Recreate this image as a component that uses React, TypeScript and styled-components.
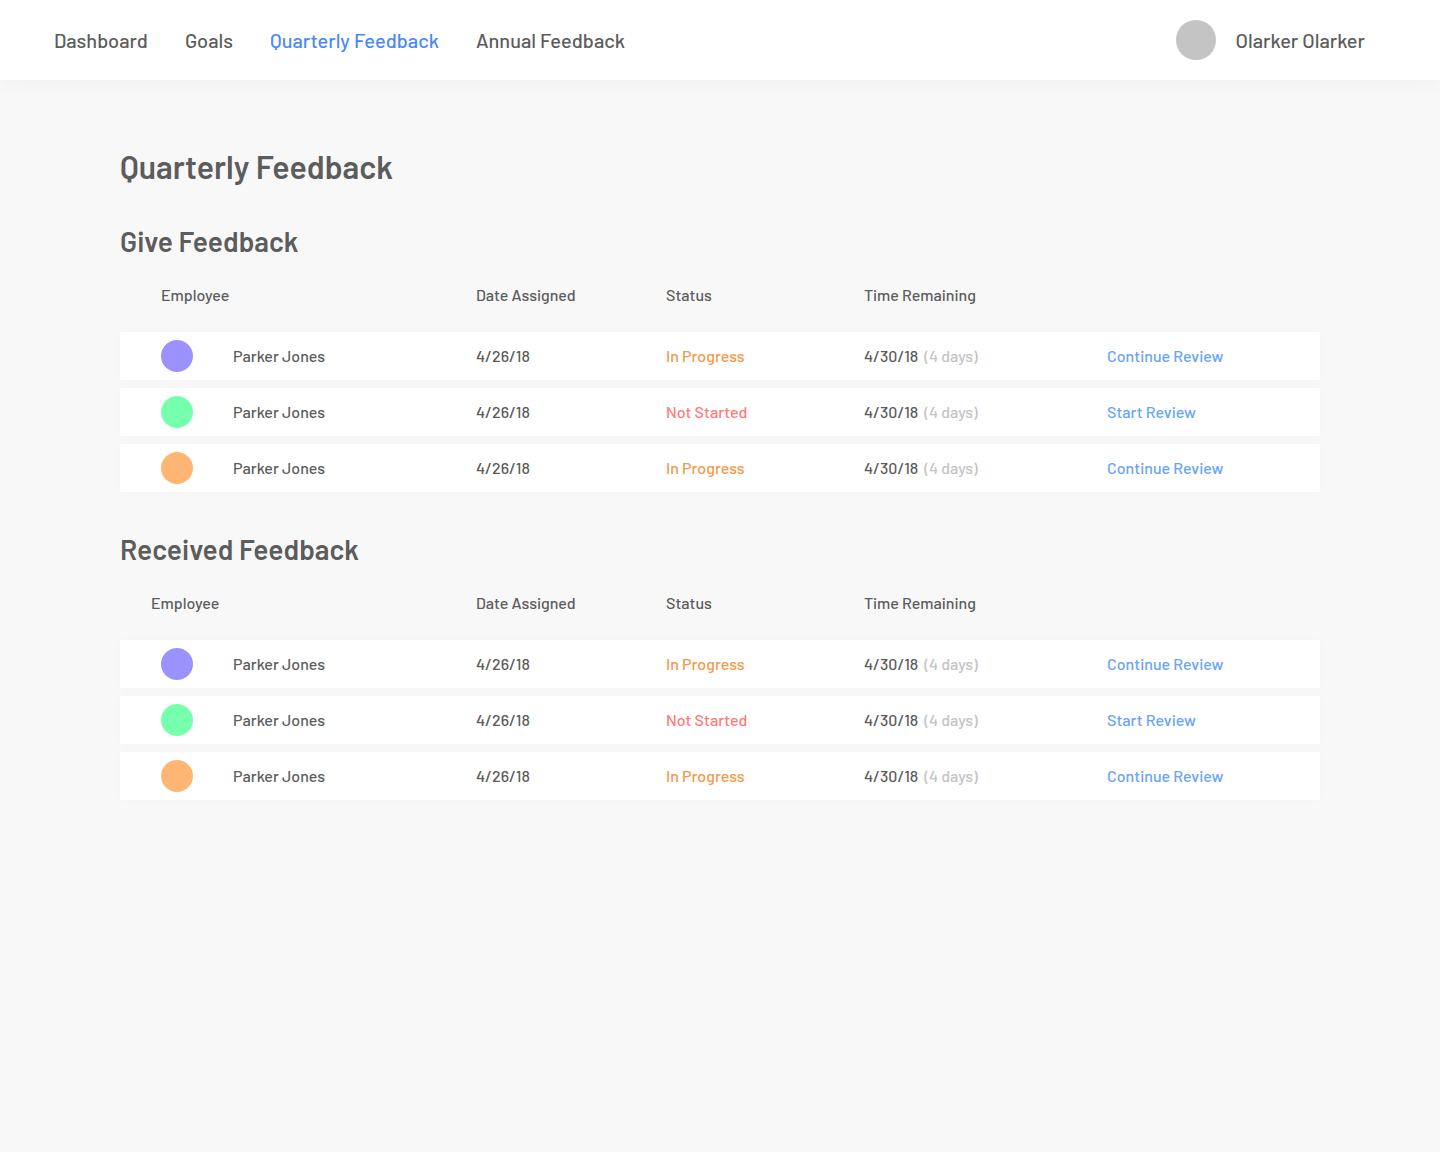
import React from "react";
import styled, { createGlobalStyle } from "styled-components";

const GlobalStyle = createGlobalStyle`
  *, *::before, *::after { box-sizing: border-box; }
  body {
    margin: 0;
    min-height: 100vh;
    background: #f8f8f8;
    color: #5c5c5c;
    font-family: Barlow, Roboto, "Noto Sans", sans-serif;
    font-size: 16px;
    line-height: 24px;
    font-weight: 500;
  }
`;

const Header = styled.header`
  position: relative;
  display: flex;
  align-items: center;
  justify-content: space-between;
  min-height: 80px;
  padding: 0 75px 0 54px;
  background: #ffffff;
  box-shadow: 0 4px 20px rgba(0, 0, 0, 0.03);
  font-size: 20px;
`;

const Nav = styled.nav`
  display: flex;
  gap: 37px;
`;

const NavLink = styled.a<{ $active?: boolean }>`
  color: ${(p) => (p.$active ? "#4b88f7" : "inherit")};
  text-decoration: none;
`;

const User = styled.div`
  display: flex;
  align-items: center;
  gap: 20px;
`;

const Avatar = styled.span<{ $size: number; $color: string }>`
  flex: none;
  width: ${(p) => p.$size}px;
  height: ${(p) => p.$size}px;
  border-radius: 50%;
  background: ${(p) => p.$color};
`;

const Main = styled.main`
  max-width: 1440px;
  margin: 0 auto;
  padding: 67px 120px;
`;

const Title = styled.h1`
  margin: 0 0 40px;
  font-size: 32px;
  line-height: 38px;
  font-weight: 600;
`;

const Section = styled.section`
  margin-bottom: 33px;
`;

const SectionTitle = styled.h2`
  margin: 0 0 18px;
  font-size: 28px;
  line-height: 32px;
  font-weight: 600;
`;

const Table = styled.table`
  width: 100%;
  table-layout: fixed;
  border-collapse: separate;
  border-spacing: 0 8px;
`;

const Col = styled.col<{ $width: number }>`
  width: ${(p) => p.$width}px;
`;

const HeadCell = styled.th<{ $indent?: number }>`
  height: 41px;
  padding: 0 0 0 ${(p) => p.$indent ?? 0}px;
  font-weight: 500;
  text-align: left;
  vertical-align: top;
`;

const Row = styled.tr`
  border-radius: 2px;
  box-shadow: 0 0 10px rgba(0, 0, 0, 0.02);
`;

const Cell = styled.td<{ $color?: string }>`
  height: 48px;
  padding: 0;
  background: #ffffff;
  color: ${(p) => p.$color ?? "inherit"};
  &:first-child { border-radius: 2px 0 0 2px; }
  &:last-child { border-radius: 0 2px 2px 0; }
`;

const Person = styled.div`
  display: flex;
  align-items: center;
  gap: 40px;
  padding-left: 41px;
`;

const Remaining = styled.span`
  margin-left: 6px;
  color: #c4c4c4;
`;

const Action = styled.a`
  color: #68a4f4;
  text-decoration: none;
`;

const columns = [356, 190, 198, 243, 213];

const reviews = [
  { color: "#9c92ff", started: true },
  { color: "#76ffac", started: false },
  { color: "#ffb573", started: true },
];

function FeedbackSection({ id, title, indent }: { id: string; title: string; indent: number }) {
  return (
    <Section aria-labelledby={id}>
      <SectionTitle id={id}>{title}</SectionTitle>
      <Table>
        <colgroup>
          {columns.map((width) => (
            <Col key={width} $width={width} />
          ))}
        </colgroup>
        <thead>
          <tr>
            <HeadCell $indent={indent}>Employee</HeadCell>
            <HeadCell>Date Assigned</HeadCell>
            <HeadCell>Status</HeadCell>
            <HeadCell>Time Remaining</HeadCell>
            <HeadCell />
          </tr>
        </thead>
        <tbody>
          {reviews.map(({ color, started }) => (
            <Row key={color}>
              <Cell>
                <Person>
                  <Avatar $size={32} $color={color} />
                  Parker Jones
                </Person>
              </Cell>
              <Cell>4/26/18</Cell>
              <Cell $color={started ? "#f2994a" : "#ff7a7a"}>
                {started ? "In Progress" : "Not Started"}
              </Cell>
              <Cell>
                4/30/18<Remaining>(4 days)</Remaining>
              </Cell>
              <Cell>
                <Action href="#">{started ? "Continue Review" : "Start Review"}</Action>
              </Cell>
            </Row>
          ))}
        </tbody>
      </Table>
    </Section>
  );
}

export default function App() {
  return (
    <>
      <GlobalStyle />
      <Header>
        <Nav>
          <NavLink href="#">Dashboard</NavLink>
          <NavLink href="#">Goals</NavLink>
          <NavLink href="#" $active aria-current="page">Quarterly Feedback</NavLink>
          <NavLink href="#">Annual Feedback</NavLink>
        </Nav>
        <User>
          <Avatar $size={40} $color="#c4c4c4" />
          <span>Olarker Olarker</span>
        </User>
      </Header>
      <Main>
        <Title>Quarterly Feedback</Title>
        <FeedbackSection id="give" title="Give Feedback" indent={41} />
        <FeedbackSection id="received" title="Received Feedback" indent={31} />
      </Main>
    </>
  );
}
